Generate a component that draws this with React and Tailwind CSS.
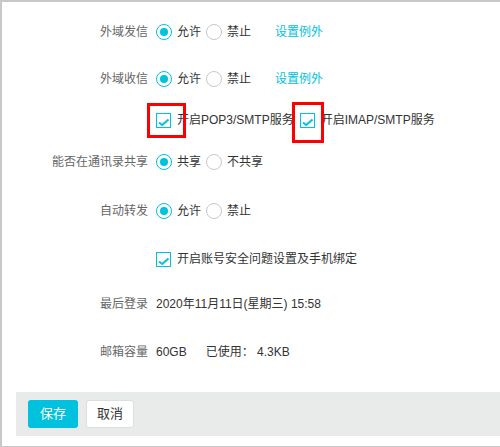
import React from "react";

const font = { fontFamily: '"Liberation Sans", "Noto Sans CJK SC", sans-serif' };

function Radio({ checked, label }) {
  return (
    <span className="flex items-center gap-[5px]">
      {checked ? (
        <span className="w-4 h-4 rounded-full border-[1.5px] border-[#00c1de] flex items-center justify-center">
          <span className="w-2 h-2 rounded-full bg-[#00c1de]" />
        </span>
      ) : (
        <span className="w-4 h-4 rounded-full border border-[#c8c8c8]" />
      )}
      <span className="text-[#333]">{label}</span>
    </span>
  );
}

function Check({ label }) {
  return (
    <span className="flex items-center gap-[6px]">
      <svg width="15" height="15" viewBox="0 0 15 15">
        <rect x="0.5" y="0.5" width="14" height="14" fill="#fff" stroke="#00c1de" />
        <path d="M3 9.5 L6.2 12 L12.5 6.5" fill="none" stroke="#00c1de" strokeWidth="2" />
      </svg>
      <span className="text-[#333]">{label}</span>
    </span>
  );
}

function Row({ label, className, children }) {
  return (
    <div className={`flex items-center h-5 ${className}`}>
      <div className="w-[146px] text-right text-[#666] shrink-0">{label}</div>
      <div className="flex items-center ml-2">{children}</div>
    </div>
  );
}

export default function App() {
  return (
    <div style={font} className="relative w-[500px] h-[447px] bg-white text-[12px] border-l-2 border-t-2 border-b border-[#c8c8c8] overflow-hidden">
      <div className="pt-[20px]">
        <Row label="外域发信">
          <Radio checked label="允许" />
          <span className="ml-[5px]"><Radio label="禁止" /></span>
          <a className="ml-[24px] text-[#00c1de]">设置例外</a>
        </Row>
        <Row label="外域收信" className="mt-[27px]">
          <Radio checked label="允许" />
          <span className="ml-[5px]"><Radio label="禁止" /></span>
          <a className="ml-[24px] text-[#00c1de]">设置例外</a>
        </Row>
        <Row label="" className="mt-[21px]">
          <Check label="开启POP3/SMTP服务" />
          <span className="ml-[6px]"><Check label="开启IMAP/SMTP服务" /></span>
        </Row>
        <Row label="能否在通讯录共享" className="mt-[22px]">
          <Radio checked label="共享" />
          <span className="ml-[5px]"><Radio label="不共享" /></span>
        </Row>
        <Row label="自动转发" className="mt-[29px]">
          <Radio checked label="允许" />
          <span className="ml-[5px]"><Radio label="禁止" /></span>
        </Row>
        <Row label="" className="mt-[28px]">
          <Check label="开启账号安全问题设置及手机绑定" />
        </Row>
        <Row label="最后登录" className="mt-[25px]">
          <span className="text-[#333]">2020年11月11日(星期三) 15:58</span>
        </Row>
        <Row label="邮箱容量" className="mt-[28px]">
          <span className="text-[#333]">60GB</span>
          <span className="ml-[19px] text-[#333]">已使用： 4.3KB</span>
        </Row>
      </div>

      <div className="mt-[30px] ml-[14px] h-[44px] bg-[#e9eaea] flex items-center gap-2 pl-3">
        <button className="w-[50px] h-[28px] rounded-[3px] bg-[#00c1de] text-white text-[13px]">保存</button>
        <button className="w-[48px] h-[28px] rounded-[3px] bg-white border border-[#ddd] text-[#333] text-[13px]">取消</button>
      </div>

      <div className="absolute left-[145px] top-[101px] w-[39px] h-[35px] border-[3px] border-[#ff0000]" />
      <div className="absolute left-[290px] top-[100px] w-[32px] h-[41px] border-[3px] border-[#ff0000]" />
    </div>
  );
}
